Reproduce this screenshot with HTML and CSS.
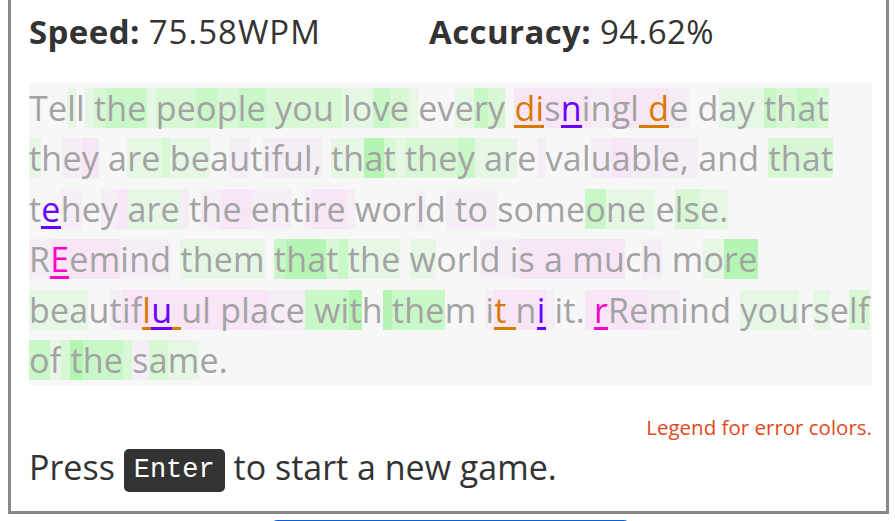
FILE: index.html
```html
<!DOCTYPE html>
<html lang="en">
<head>
<meta charset="utf-8">
<title>Typing game</title>
<link rel="stylesheet" href="styles.css">
</head>
<body>
<div class="page">
  <section class="game">
    <div class="stats">
      <div class="stat"><b>Speed:</b> <span class="num">75.58WPM</span></div>
      <div class="stat"><b>Accuracy:</b> 94.62%</div>
    </div>
    <div class="passage">
      <div class="line"><span>Te</span><span class="a">l</span><span>l</span><span class="a"> </span><span class="b">t</span><span class="c">he</span><span class="a"> </span><span class="b">pe</span><span class="c">o</span><span class="b">p</span><span class="c">le</span><span class="b"> you </span><span class="a">lo</span><span class="c">v</span><span class="b">e</span><span class="a"> </span><span>ev</span><span class="a">e</span><span class="c">r</span><span class="b">y</span><span> </span><span class="q eo">di</span><span class="q">s</span><span class="q ep">n</span><span class="q">i</span><span class="p">n</span><span class="q">gl</span><span class="q eo"> d</span><span class="p">e</span><span> d</span><span class="a">ay </span><span class="c">t</span><span class="b">h</span><span class="c">a</span><span class="b">t</span></div>
      <div class="line"><span class="a">t</span><span>h</span><span class="p">e</span><span class="q">y</span><span> a</span><span class="a">re</span><span class="b"> </span><span class="a">be</span><span>a</span><span class="p">u</span><span>t</span><span class="p">iful,</span><span> </span><span class="a">th</span><span class="d">a</span><span class="b">t</span><span class="a"> </span><span class="b">the</span><span class="c">y</span><span class="a"> ar</span><span>e</span><span class="p"> </span><span>val</span><span class="p">u</span><span class="q">a</span><span class="p">ble, </span><span>and </span><span class="b">that</span></div>
      <div class="line"><span>t</span><span class="ep">e</span><span class="p">h</span><span>e</span><span class="p">y</span><span class="q"> </span><span class="a">are</span><span class="p"> </span><span>t</span><span class="p">h</span><span class="q">e </span><span class="p">en</span><span>t</span><span class="p">i</span><span class="q">re</span><span class="p"> </span><span>wor</span><span class="p">l</span><span>d</span><span class="p"> to </span><span>some</span><span class="c">o</span><span class="a">ne </span><span>e</span><span class="b">ls</span><span class="a">e.</span></div>
      <div class="line"><span class="p">R</span><span class="q em">E</span><span class="q">em</span><span class="p">ind</span><span> </span><span class="a">them</span><span> </span><span class="c">t</span><span class="d">ha</span><span class="b">t</span><span class="c"> </span><span class="a">the</span><span> </span><span class="a">w</span><span>orl</span><span class="p">d i</span><span class="q">s a mu</span><span>c</span><span class="p">h</span><span> m</span><span class="a">o</span><span class="d">re</span></div>
      <div class="line"><span class="a">bea</span><span>u</span><span class="p">t</span><span class="q">if</span><span class="q eo">l</span><span class="q ep">u</span><span class="q eo"> </span><span class="q">ul pla</span><span class="p">ce</span><span class="c"> wi</span><span class="d">t</span><span>h</span><span class="d"> </span><span class="c">the</span><span>m </span><span class="p">i</span><span class="q eo">t </span><span class="q">n</span><span class="q ep">i</span><span class="p"> </span><span>it.</span><span class="q"> </span><span class="q em">r</span><span class="q">Re</span><span class="p">m</span><span>ind </span><span class="a">you</span><span>r</span><span class="a">s</span><span>e</span><span class="b">lf</span></div>
      <div class="line"><span class="c">o</span><span class="a">f</span><span class="b"> </span><span class="d">t</span><span class="c">he</span><span class="b"> </span><span class="p">s</span><span class="b">a</span><span class="a">m</span><span>e.</span></div>
    </div>
    <p class="legend">Legend for error colors.</p>
    <p class="prompt">Press <kbd class="key">Enter</kbd> to start a new game.</p>
  </section>
  <div class="actions"><button class="btn" type="button" aria-label="New game"></button></div>
</div>
</body>
</html>
```

FILE: styles.css
```css
html, body {
  margin: 0;
  padding: 0;
  background: #fff;
}

body {
  font-family: "Open Sans", "Noto Sans", sans-serif;
  color: #333;
  overflow: hidden;
}

.game {
  margin-left: 8px;
  width: 881px;
  box-sizing: border-box;
  border: 3px solid #888;
  border-top: 0;
  padding: 9px 14px 19px 18px;
}

.stats {
  display: grid;
  grid-template-columns: 400px 1fr;
  font-size: 33px;
  line-height: 45px;
  letter-spacing: 0.4px;
  color: #333;
}

.stats b {
  font-weight: 700;
}

.stats .num {
  letter-spacing: 1px;
}

.passage {
  margin-top: 29px;
  background: #f7f7f7;
  color: #a3a3a3;
  font-size: 34px;
  line-height: 50.4px;
  letter-spacing: 0.22px;
}

.line {
  white-space: pre;
}

.line > span {
  display: inline-block;
  height: 40px;
  line-height: 40px;
  box-sizing: border-box;
  vertical-align: baseline;
}

.a { background: #e6f7e6; }
.b { background: #d7f7d5; }
.c { background: #c8f7c8; }
.d { background: #b4f5b4; }
.p { background: #f6eef6; }
.q { background: #f8e5f6; }

.line > .eo { color: #d97a00; border-bottom: 3px solid #d97a00; }
.line > .ep { color: #6a00ff; border-bottom: 3px solid #6a00ff; }
.line > .em { color: #ff00cc; border-bottom: 3px solid #ff00cc; }

.legend {
  margin: 28px 0 0;
  font-size: 20.5px;
  line-height: 28px;
  text-align: right;
  color: #e4471c;
}

.prompt {
  margin: 3px 0 0;
  font-size: 34px;
  line-height: 46px;
  color: #333;
}

.key {
  display: inline-block;
  font-family: "Liberation Mono", monospace;
  font-size: 27px;
  line-height: 31px;
  padding: 6px 10px;
  background: #333;
  color: #fff;
  border-radius: 5px;
  vertical-align: 3px;
}

.actions {
  display: flex;
  justify-content: center;
  padding-left: 6px;
  margin-top: 6px;
}

.btn {
  width: 359px;
  height: 44px;
  border: 0;
  border-radius: 6px;
  background: #0b5ed7;
  padding: 0;
}
```
